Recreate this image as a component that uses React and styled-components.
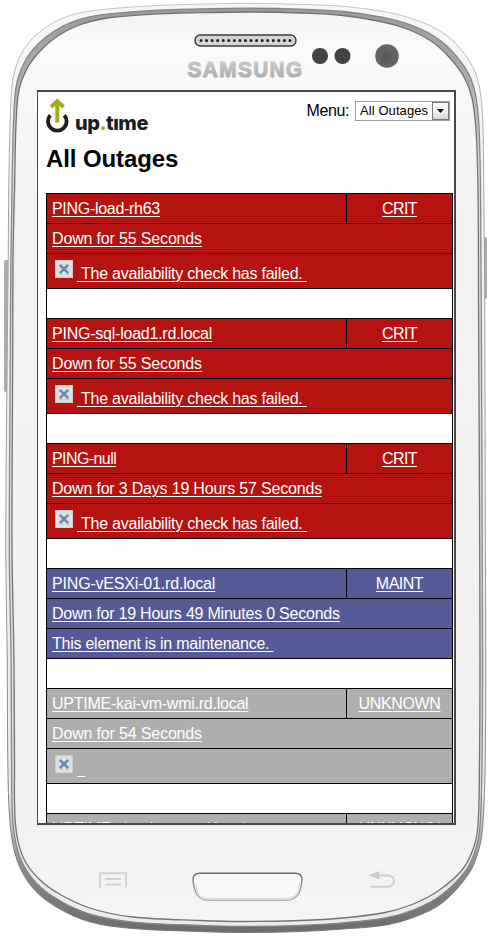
import React from "react";
import styled, { createGlobalStyle } from "styled-components";

const GlobalStyle = createGlobalStyle`
  *, *::before, *::after { box-sizing: border-box; }
  body { margin: 0; background: #fff; font-family: "Liberation Sans", Arial, sans-serif; }
`;

/* ---------- phone shell drawing ---------- */

// Each entry: outer contour x, y, then inner contour x, y (clockwise).
const CONTOUR = [
  [250, 3, 250, 12], [300, 4, 300, 13], [343, 6, 343, 15.5], [383, 11, 383, 22],
  [410, 17.5, 407, 29], [436, 28, 431, 41], [456, 43, 449, 57], [473, 66, 464, 77],
  [480, 88, 472, 98], [483, 120, 476, 130], [484, 190, 478, 190], [485, 300, 478.5, 300],
  [485.5, 500, 479.5, 500], [486, 660, 480, 660], [485.5, 760, 479.5, 760], [483, 825, 478, 825],
  [479, 850, 473.5, 848], [469, 874, 462, 870], [443, 903, 438, 891], [416, 917, 412, 904.5],
  [386, 925.5, 385, 912.5], [343, 929.5, 343, 918], [300, 932, 300, 920.5], [243, 933, 243, 921.5],
  [200, 932, 200, 920.5], [133, 929, 133, 917], [90, 922.5, 93, 909], [57, 908, 62, 895.5],
  [33, 889, 39, 879], [17, 861, 23, 857], [10, 825, 15.5, 825], [7.5, 760, 14.5, 760],
  [7, 660, 14, 660], [5.5, 550, 12, 550], [6.5, 400, 12.5, 400], [8, 260, 13, 260],
  [8.5, 190, 14.5, 190], [10, 120, 16, 125], [12.5, 80, 19, 90], [20, 55, 28, 67],
  [33, 37, 41, 50], [50, 24, 57, 36.5], [73, 14, 78, 25.5], [100, 9.5, 104, 18.5],
  [150, 5.5, 150, 14.3], [200, 3.8, 200, 12.7],
];

function contourPath(t) {
  const pts = CONTOUR.map(([ax, ay, bx, by]) => [ax + (bx - ax) * t, ay + (by - ay) * t]);
  const n = pts.length;
  const at = (i) => pts[(i + n) % n];
  const f = (v) => v.toFixed(2);
  let d = `M${f(pts[0][0])} ${f(pts[0][1])}`;
  for (let i = 0; i < n; i += 1) {
    const [p0, p1, p2, p3] = [at(i - 1), at(i), at(i + 1), at(i + 2)];
    const len = Math.hypot(p2[0] - p1[0], p2[1] - p1[1]);
    const tan = (a, b) => {
      const l = Math.hypot(b[0] - a[0], b[1] - a[1]) || 1;
      return [((b[0] - a[0]) / l) * len / 3, ((b[1] - a[1]) / l) * len / 3];
    };
    const t1 = tan(p0, p2);
    const t2 = tan(p1, p3);
    d += `C${f(p1[0] + t1[0])} ${f(p1[1] + t1[1])} ${f(p2[0] - t2[0])} ${f(p2[1] - t2[1])} ${f(p2[0])} ${f(p2[1])}`;
  }
  return `${d}Z`;
}

const ShellSvg = styled.svg`
  position: absolute;
  inset: 0;
  display: block;
`;

function Shell() {
  return (
    <ShellSvg width="493" height="936" viewBox="0 0 493 936" aria-hidden="true">
      <defs>
        <linearGradient id="face" x1="0" y1="0" x2="0" y2="1">
          <stop offset="0" stopColor="#f4f4f4" />
          <stop offset="0.04" stopColor="#fafafa" />
          <stop offset="0.2" stopColor="#f3f2f3" />
          <stop offset="0.88" stopColor="#f2f0f1" />
          <stop offset="1" stopColor="#f6f5f6" />
        </linearGradient>
        <linearGradient id="rim" x1="0" y1="0" x2="0" y2="1">
          <stop offset="0" stopColor="#f6f6f6" />
          <stop offset="0.85" stopColor="#ebebeb" />
          <stop offset="0.93" stopColor="#8a8a8a" />
          <stop offset="1" stopColor="#6c6c6c" />
        </linearGradient>
        <linearGradient id="edge" x1="0" y1="0" x2="0" y2="1">
          <stop offset="0" stopColor="#c6c6c6" />
          <stop offset="0.2" stopColor="#a2a2a2" />
          <stop offset="0.6" stopColor="#9b9b9b" />
          <stop offset="1" stopColor="#777" />
        </linearGradient>
        <linearGradient id="band" x1="0" y1="0" x2="0" y2="1">
          <stop offset="0" stopColor="#999c9d" />
          <stop offset="0.08" stopColor="#aaacad" />
          <stop offset="0.17" stopColor="#dcdcdd" />
          <stop offset="0.85" stopColor="#e0e0e0" />
          <stop offset="1" stopColor="#ececec" />
        </linearGradient>
        <linearGradient id="brand" x1="0" y1="0" x2="0" y2="1">
          <stop offset="0" stopColor="#d2d2d2" />
          <stop offset="1" stopColor="#a5a5a5" />
        </linearGradient>
        <linearGradient id="home" x1="0" y1="0" x2="0" y2="1">
          <stop offset="0" stopColor="#66675f" />
          <stop offset="0.2" stopColor="#85867f" />
          <stop offset="1" stopColor="#b0b2b0" />
        </linearGradient>
      </defs>

      <rect x="4" y="260" width="5" height="132" rx="2" fill="#a9abac" />
      <rect x="482" y="237" width="5" height="62" rx="2" fill="#a9abac" />

      <path d={contourPath(0.04)} fill="url(#rim)" stroke="url(#edge)" strokeWidth="1" />
      <path d={contourPath(0.58)} fill="url(#band)" stroke="#858687" strokeWidth="1.3" />
      <path d={contourPath(1)} fill="url(#face)" stroke="#707273" strokeWidth="1.3" />

      <rect x="195" y="35" width="101" height="11" rx="5.5" fill="#d4d4d4" stroke="#3b3b3b" strokeWidth="1.4" />
      <path d="M201 40.5H291" stroke="#1b1b1b" strokeWidth="3" strokeLinecap="round" strokeDasharray="0 5.56" />

      <text transform="translate(187.500 77.300) scale(0.91 1)" fontSize="22.8" fontWeight="700"
        fontFamily="Liberation Sans, Arial, sans-serif" fill="url(#brand)" stroke="url(#brand)"
        strokeWidth="1.2" textLength="126" lengthAdjust="spacing">SAMSUNG</text>

      <circle cx="320" cy="56" r="8" fill="#424444" />
      <circle cx="342.5" cy="56" r="8" fill="#424444" />
      <circle cx="387" cy="56" r="11.8" fill="#636565" />
      <circle cx="386.5" cy="57.5" r="5" fill="#5d5f5f" stroke="#585a5a" />
      <circle cx="386.5" cy="57.5" r="2" fill="none" stroke="#545656" />

      <path
        d="M200 873.3H295Q302 873.3 302 880C301 890 299 900.3 286 900.3H209C196 900.3 194 890 193 880Q193 873.3 200 873.3Z"
        fill="#f8f8f8" stroke="url(#home)" strokeWidth="1.5"
      />
      <path d="M195.5 883C196.5 892 199 898.3 209 898.3H286C296 898.3 298.500 892 299.5 883" fill="none" stroke="#d9d9d9" />

      <path d="M100 887.500V873.200H126V887.500M105 879H121M105 884.500H121" fill="none" stroke="#d5d5d5" strokeWidth="2" />
      <path d="M378 875.500H387Q394 875.500 394 881T387 886.700H371" fill="none" stroke="#d0d0d0" strokeWidth="2" />
      <path d="M369 875.300L379.500 871V879.500Z" fill="#cbcbcb" />
    </ShellSvg>
  );
}

/* ---------- layout ---------- */

const Phone = styled.main`
  position: relative;
  width: 493px;
  height: 936px;
  padding: 90px 0 0 37px;
  overflow: hidden;
  background: #fff;
`;

const Screen = styled.section`
  position: relative;
  width: 419px;
  height: 735px;
  padding: 0 1px 0 8px;
  overflow: hidden;
  background: #fff;
  border: solid #4a4748;
  border-width: 2px 2px 2px 1px;
`;

const TopBar = styled.header`
  display: flex;
  justify-content: space-between;
  height: 50px;
`;

const Logo = styled.div`
  display: flex;
  padding-top: 6px;
`;

const LogoText = styled.span`
  margin: 11px 0 0 6px;
  font: 800 20px/28px Inter, "Open Sans", sans-serif;
  letter-spacing: -0.5px;
  color: #1d1d1f;
`;

const LogoDot = styled.span`
  color: #a5ab14;
`;

const MenuArea = styled.div`
  display: flex;
  align-items: center;
  gap: 6px;
  height: 20px;
  margin: 9px 3px 0 0;
  font-size: 16px;
`;

const MenuLabel = styled.span`
  margin-top: -1px;
  letter-spacing: -0.4px;
`;

const SelectBox = styled.button`
  display: flex;
  align-items: center;
  justify-content: space-between;
  width: 95px;
  height: 20px;
  padding: 0 0 0 4px;
  font: 13px/18px "Liberation Sans", Arial, sans-serif;
  letter-spacing: 0.08px;
  white-space: nowrap;
  color: #000;
  background: #fff;
  border: 1px solid #a0a2a9;
`;

const SelectArrow = styled.span`
  display: grid;
  flex: none;
  place-items: center;
  width: 17px;
  height: 18px;
  background: linear-gradient(#f4f4f4 45%, #d2d2d2);
  border: 1px solid #77797c;
`;

const Title = styled.h1`
  margin: 3px 0 20px;
  font-size: 24px;
  line-height: 28px;
  letter-spacing: -0.1px;
  color: #000;
`;

const OutageTable = styled.div`
  display: flex;
  flex-direction: column;
  border: solid #000;
  border-width: 0 1px;
`;

const TONES = { crit: "#b51210", maint: "#565a97", unknown: "#aeaeae" };

const Outage = styled.article`
  color: #fff;
  background: ${(p) => TONES[p.$tone]};
`;

const Row = styled.div`
  display: flex;
  height: ${(p) => (p.$tall ? 35 : 30)}px;
  border-top: 1px solid #000;
`;

const Cell = styled.div`
  flex: 1;
  padding: ${(p) => (p.$low ? "10px 5px 0 4px" : "5px 5px 0")};
  font-size: 16px;
  line-height: 19px;
  white-space: pre;
`;

const StateCell = styled(Cell)`
  flex: 0 0 106px;
  text-align: center;
  border-left: 1px solid #000;
`;

const IconCell = styled.div`
  flex: none;
  padding: 6px 0 0 8px;
`;

const Link = styled.a`
  color: inherit;
  letter-spacing: ${(p) => p.$track || 0}px;
  text-decoration: underline;
  text-decoration-thickness: 1px;
  text-underline-offset: 2px;
`;

const Spacer = styled.div`
  height: 30px;
  background: #fff;
  border-top: 1px solid #000;
`;

function FailedIcon() {
  return (
    <svg width="18" height="18" viewBox="0 0 18 18" display="block">
      <rect width="18" height="18" fill="#cdcfd1" />
      <rect x="1" y="1" width="16" height="16" fill="#dfe0e2" />
      <path d="M4.800 4.800L13.200 13.200M13.200 4.800L4.800 13.200" stroke="#6f87ad" strokeWidth="2.600" />
      <path d="M5 14.500H8M11 14.500H14" stroke="#bcc0c6" />
    </svg>
  );
}

function UptimeMark() {
  return (
    <svg width="23" height="36" viewBox="0 0 23 36">
      <path d="M4.300 17.300A9.300 9.300 0 1 0 18.300 17.300" fill="none" stroke="#1d1d1f" strokeWidth="3.800" />
      <path d="M11.300 24.500V4M5 9L11.300 3.200L17.600 9" fill="none" stroke="#a5ab14" strokeWidth="4" />
    </svg>
  );
}

const CHECK_FAILED = " The availability check has failed. ";

const OUTAGES = [
  { tone: "crit", name: ["PING-load-rh63", -0.3], state: ["CRIT", -0.6], time: ["Down for 55 Seconds", -0.16], note: [CHECK_FAILED, -0.23], icon: true },
  { tone: "crit", name: ["PING-sql-load1.rd.local", -0.23], state: ["CRIT", -0.6], time: ["Down for 55 Seconds", -0.16], note: [CHECK_FAILED, -0.23], icon: true },
  { tone: "crit", name: ["PING-null", -0.58], state: ["CRIT", -0.6], time: ["Down for 3 Days 19 Hours 57 Seconds", -0.19], note: [CHECK_FAILED, -0.23], icon: true },
  { tone: "maint", name: ["PING-vESXi-01.rd.local", -0.18], state: ["MAINT", -0.5], time: ["Down for 19 Hours 49 Minutes 0 Seconds", -0.22], note: ["This element is in maintenance. ", -0.25] },
  { tone: "unknown", name: ["UPTIME-kai-vm-wmi.rd.local", -0.24], state: ["UNKNOWN", -0.35], time: ["Down for 54 Seconds", -0.16], note: ["  ", -0.25], icon: true },
  { tone: "unknown", name: ["UPTIME-shaul-vm-s.rd.local", -0.24], state: ["UNKNOWN", -0.35] },
];

function Entry({ value }) {
  const [label, track] = value;
  return <Link $track={track}>{label}</Link>;
}

function OutageRecord({ item }) {
  return (
    <>
      <Outage $tone={item.tone}>
        <Row>
          <Cell><Entry value={item.name} /></Cell>
          <StateCell><Entry value={item.state} /></StateCell>
        </Row>
        {item.time && (
          <Row>
            <Cell><Entry value={item.time} /></Cell>
          </Row>
        )}
        {item.note && (
          <Row $tall={item.icon}>
            {item.icon && <IconCell><FailedIcon /></IconCell>}
            <Cell $low={item.icon}><Entry value={item.note} /></Cell>
          </Row>
        )}
      </Outage>
      <Spacer />
    </>
  );
}

export default function App() {
  return (
    <>
      <GlobalStyle />
      <Phone>
        <Shell />
        <Screen>
          <TopBar>
            <Logo>
              <UptimeMark />
              <LogoText>up<LogoDot>.</LogoDot>tıme</LogoText>
            </Logo>
            <MenuArea>
              <MenuLabel>Menu:</MenuLabel>
              <SelectBox>
                All Outages
                <SelectArrow>
                  <svg width="7" height="4" viewBox="0 0 7 4" display="block"><path d="M0 0H7L3.500 4Z" /></svg>
                </SelectArrow>
              </SelectBox>
            </MenuArea>
          </TopBar>
          <Title>All Outages</Title>
          <OutageTable>
            {OUTAGES.map((item) => <OutageRecord key={item.name[0]} item={item} />)}
          </OutageTable>
        </Screen>
      </Phone>
    </>
  );
}
